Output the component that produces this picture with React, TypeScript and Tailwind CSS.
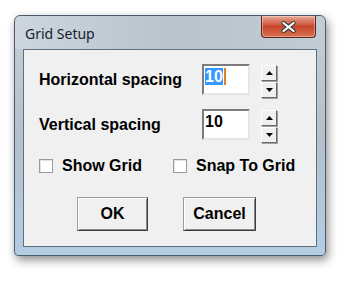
import React from 'react';

function Spinner() {
  const btn =
    'flex h-[16px] w-[16px] items-center justify-center border border-t-white border-l-white border-b-[#6a6a6a] border-r-[#6a6a6a] bg-[#f0f0f0] shadow-[1px_1px_0_#a0a0a0]';
  return (
    <div className="ml-[11px] flex flex-col self-start mt-[1px] gap-[1px]">
      <div className={btn}>
        <svg width="7" height="4" viewBox="0 0 7 4">
          <path d="M3.5 0 L7 4 L0 4 Z" fill="#000" />
        </svg>
      </div>
      <div className={btn}>
        <svg width="7" height="4" viewBox="0 0 7 4">
          <path d="M0 0 L7 0 L3.5 4 Z" fill="#000" />
        </svg>
      </div>
    </div>
  );
}

function SpinRow({ label, selected }: { label: string; selected?: boolean }) {
  return (
    <div className="flex h-[31px] items-center">
      <div className="w-[178px] shrink-0 pl-[15px] text-[16px] font-bold text-black">{label}</div>
      <div className="h-[31px] w-[48px] shrink-0 border-2 border-t-[#7c7c7c] border-l-[#7c7c7c] border-b-[#e6e6e6] border-r-[#e6e6e6] bg-white pl-[1px] pt-[2px] text-[16px] font-bold leading-[17px] text-black">
        {selected ? (
          <span className="inline-flex items-center">
            <span className="bg-[#3399ff] text-white">10</span>
            <span className="ml-[1px] inline-block h-[17px] w-[2px] bg-[#e0812a]" />
          </span>
        ) : (
          <span>10</span>
        )}
      </div>
      <Spinner />
    </div>
  );
}

function Check({ label }: { label: string }) {
  return (
    <div className="flex items-center">
      <div className="h-[14px] w-[14px] border border-[#9a9a9a] bg-white shadow-[inset_1px_1px_0_#e2e2e2]" />
      <span className="ml-[9px] text-[16px] font-bold text-black">{label}</span>
    </div>
  );
}

function Button({ label, cls }: { label: string; cls: string }) {
  return (
    <div
      className={`flex h-[34px] items-center justify-center border border-[#9c9c9c] border-b-[#3c3c3c] border-r-[#3c3c3c] bg-[#f0f0f0] text-[16px] font-bold text-black shadow-[inset_1px_1px_0_#fff,inset_-1px_-1px_0_#8a8a8a] ${cls}`}
    >
      {label}
    </div>
  );
}

export default function App() {
  return (
    <div className="h-[282px] w-[350px] bg-white pl-[14px] pt-[15px] font-['Liberation_Sans',Arial,sans-serif]">
      <div className="flex h-[241px] w-[312px] flex-col rounded-t-[6px] rounded-b-[4px] border border-[#4d5b69] bg-gradient-to-b from-[#c6cfd7] via-[#b4c0ca] to-[#b3cde4] shadow-[2px_4px_10px_rgba(0,0,0,0.45)]">
        <div className="flex h-[33px] shrink-0 items-start justify-between rounded-t-[6px] bg-gradient-to-r from-[#cdd6de] via-[#b9c3cc] to-[#c2ccd5]">
          <span className="ml-[10px] mt-[9px] font-['Noto_Sans',sans-serif] text-[14px] leading-[18px] text-[#15202c]">
            Grid Setup
          </span>
          <div className="mr-[9px] flex h-[22px] w-[55px] items-center justify-center rounded-b-[4px] border border-t-0 border-[#5e2418] bg-gradient-to-b from-[#e7a796] via-[#c8452d] to-[#d9704f] shadow-[inset_0_0_0_1px_rgba(255,255,255,0.35)]">
            <svg width="15" height="12" viewBox="0 0 15 12">
              <path d="M2.5 2 L12.5 10 M12.5 2 L2.5 10" stroke="#3d3d3d" strokeWidth="4.2" strokeLinecap="round" />
              <path d="M2.5 2 L12.5 10 M12.5 2 L2.5 10" stroke="#fff" strokeWidth="2.2" strokeLinecap="round" />
            </svg>
          </div>
        </div>
        <div className="mx-[8px] flex h-[198px] flex-col border border-[#5f6f7e] bg-[#f0f0f0] pt-[14px]">
          <SpinRow label="Horizontal spacing" selected />
          <div className="mt-[14px]">
            <SpinRow label="Vertical spacing" />
          </div>
          <div className="mt-[17px] flex h-[18px] items-center pl-[15px]">
            <div className="w-[134px]">
              <Check label="Show Grid" />
            </div>
            <Check label="Snap To Grid" />
          </div>
          <div className="mt-[22px] flex">
            <Button label="OK" cls="ml-[53px] w-[71px]" />
            <Button label="Cancel" cls="ml-[35px] w-[73px]" />
          </div>
        </div>
      </div>
    </div>
  );
}
